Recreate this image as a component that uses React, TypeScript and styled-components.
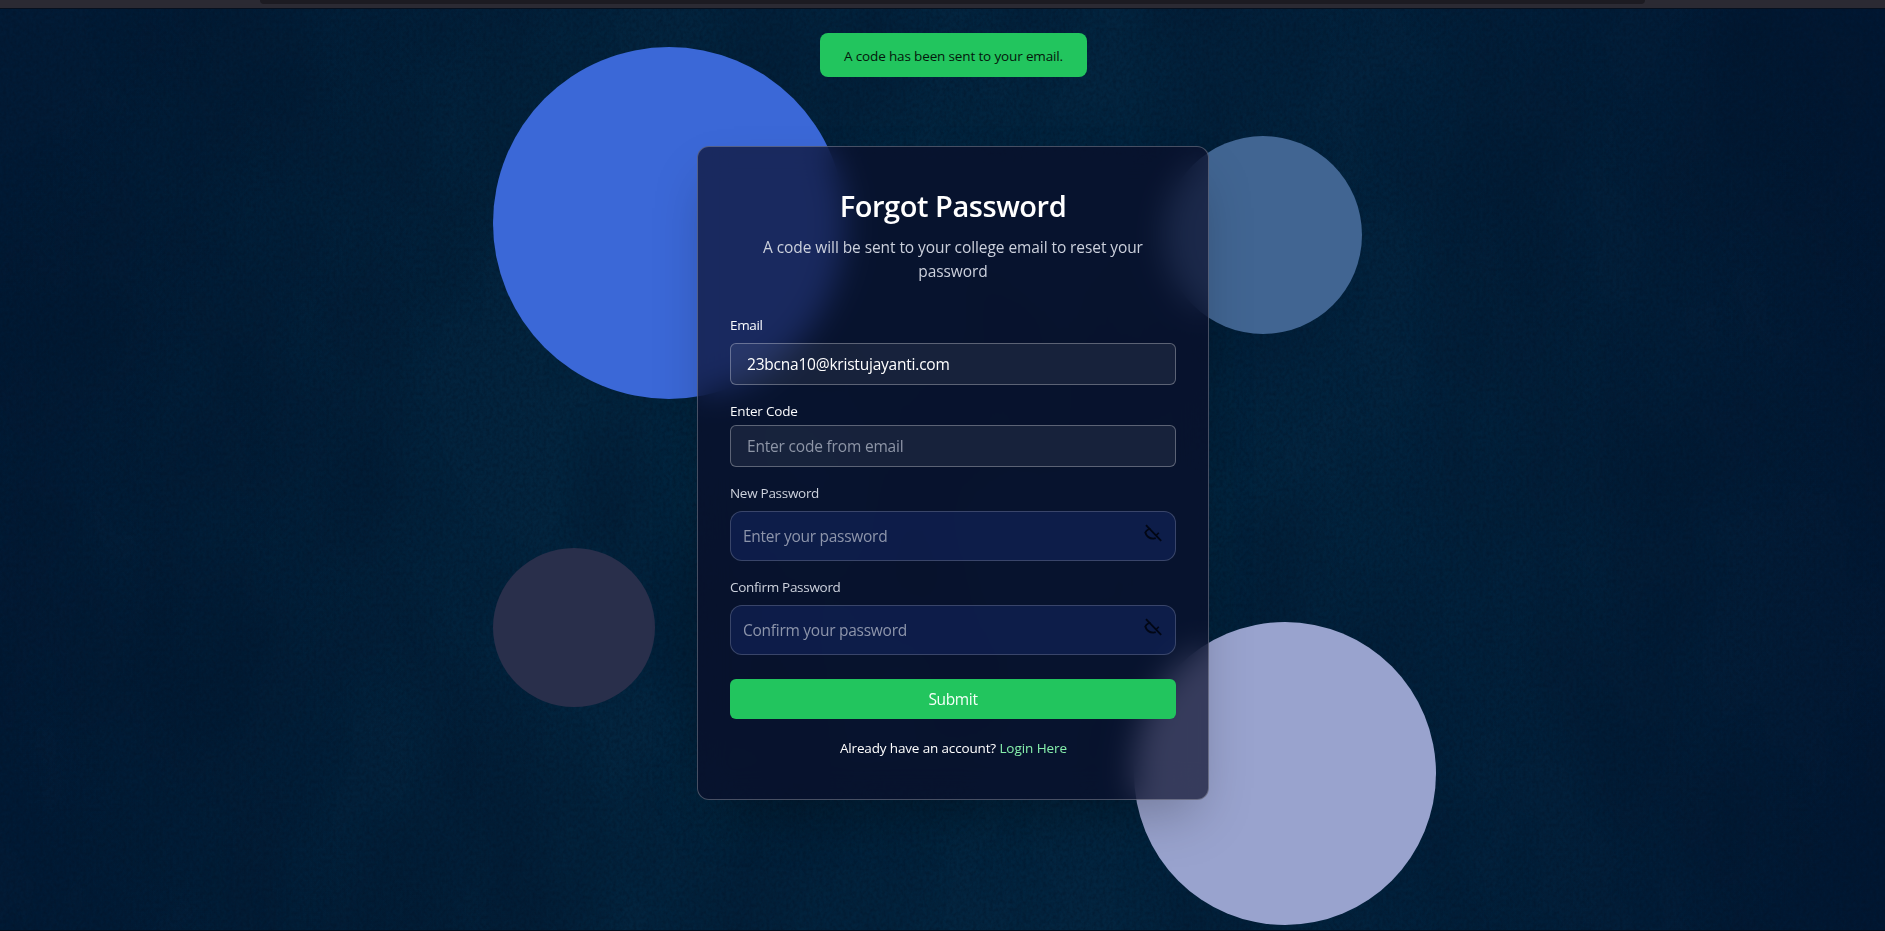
import React, { useState } from "react";
import styled, { createGlobalStyle } from "styled-components";

const GlobalStyle = createGlobalStyle`
  *, *::before, *::after { box-sizing: border-box; }
  body {
    margin: 0;
    overflow: hidden;
    background: #03203a;
    font-family: "Open Sans", "Noto Sans", sans-serif;
  }
`;

const Page = styled.div`
  position: relative;
  display: flex;
  flex-direction: column;
  height: 931px;
  overflow: hidden;
  border-bottom: 1px solid #020d1c;
  background:
    radial-gradient(ellipse 1000px 820px at 50% 52%, rgba(3, 42, 68, 0.6), rgba(3, 36, 62, 0) 100%),
    linear-gradient(90deg, #021b36 0%, #021d37 12%, #03223c 30%, #03233e 60%, #021e39 82%, #021833 100%);
`;

const Texture = styled.svg`
  position: absolute;
  inset: 0;
  width: 100%;
  height: 100%;
`;

const BrowserEdge = styled.div`
  position: relative;
  display: flex;
  justify-content: center;
  flex: none;
  height: 9px;
  padding-left: 20px;
  background: #2b2a33;
  border-bottom: 1px solid #06101f;
`;

const AddressBar = styled.div`
  width: 1385px;
  height: 4px;
  background: #1c1b22;
  border-radius: 0 0 4px 4px;
`;

const Circle = styled.div<{ $x: number; $y: number; $w: number; $h: number; $color: string }>`
  position: absolute;
  left: ${(p) => p.$x}px;
  top: ${(p) => p.$y}px;
  width: ${(p) => p.$w}px;
  height: ${(p) => p.$h}px;
  border-radius: 50%;
  background: ${(p) => p.$color};
`;

const Content = styled.main`
  display: flex;
  flex-direction: column;
  align-items: center;
  gap: 69px;
  padding: 24px 0 0 21px;
`;

const Toast = styled.div`
  position: relative;
  display: flex;
  align-items: center;
  justify-content: center;
  width: 267px;
  height: 44px;
  padding: 2px 0 0 1px;
  border-radius: 8px;
  background: #22c55e;
  color: #04170b;
  font-size: 13.5px;
  letter-spacing: -0.147px;
`;

const Card = styled.form`
  position: relative;
  display: flex;
  flex-direction: column;
  width: 512px;
  padding: 41px 32px 40px;
  border: 1px solid rgba(255, 255, 255, 0.26);
  border-radius: 12px;
  background: rgba(10, 13, 41, 0.69);
  backdrop-filter: blur(16px);
  box-shadow: 0 25px 50px -12px rgba(0, 0, 0, 0.25);
`;

const Title = styled.h1`
  margin: 0;
  color: #fff;
  font-size: 29px;
  font-weight: 600;
  line-height: 36px;
  letter-spacing: -0.45px;
  text-align: center;
`;

const Subtitle = styled.p`
  margin: 11px 0 32px;
  padding: 0 28px;
  color: #cbd0dc;
  font-size: 15.5px;
  line-height: 24px;
  letter-spacing: -0.08px;
  text-align: center;
`;

const Field = styled.div<{ $gap: number }>`
  display: flex;
  flex-direction: column;
  gap: ${(p) => p.$gap}px;
  margin-bottom: 16px;
`;

const Label = styled.label<{ $muted?: boolean; $track: number }>`
  color: ${(p) => (p.$muted ? "#cdd2dd" : "#fbfcfe")};
  font-size: 13.5px;
  line-height: 20px;
  letter-spacing: ${(p) => p.$track}px;
`;

const Input = styled.input<{ $track: number }>`
  width: 100%;
  height: 42px;
  padding: 0 16px;
  border: 1px solid rgba(255, 255, 255, 0.3);
  border-radius: 6px;
  outline: none;
  background: rgba(255, 255, 255, 0.065);
  color: #fff;
  font: 15.5px "Open Sans", "Noto Sans", sans-serif;
  letter-spacing: ${(p) => p.$track}px;
  &::placeholder { color: #8d95a6; opacity: 1; }
`;

const PasswordBox = styled.div`
  display: flex;
  height: 50px;
  padding: 0 13px 0 12px;
  border: 1px solid rgba(255, 255, 255, 0.18);
  border-radius: 12px;
  background: rgba(18, 36, 92, 0.6);
`;

const PasswordInput = styled.input<{ $track: number }>`
  flex: 1;
  min-width: 0;
  padding: 0;
  border: 0;
  outline: none;
  background: transparent;
  color: #fff;
  font: 15.5px "Open Sans", "Noto Sans", sans-serif;
  letter-spacing: ${(p) => p.$track}px;
  &::placeholder { color: #8d95ab; opacity: 1; }
`;

const EyeButton = styled.button`
  display: flex;
  align-self: flex-start;
  margin-top: 12px;
  padding: 0;
  border: 0;
  background: none;
  color: #020715;
`;

const Submit = styled.button`
  height: 40px;
  margin: 8px 0 19px;
  padding: 0;
  border: 0;
  border-radius: 6px;
  background: #22c55e;
  color: #f4fff8;
  font: 15.5px "Open Sans", "Noto Sans", sans-serif;
  letter-spacing: -0.35px;
`;

const Footer = styled.p`
  margin: 0 0 1px;
  padding-left: 1px;
  color: #fff;
  font-size: 13.5px;
  line-height: 20px;
  letter-spacing: -0.15px;
  text-align: center;
`;

const LoginLink = styled.a`
  color: #86efac;
  letter-spacing: -0.06px;
  text-decoration: none;
`;

const EyeOff = () => (
  <svg width="18" height="18" viewBox="0 0 18 18" fill="none" stroke="currentColor" strokeWidth="1.8">
    <path d="M2 1.2 17.2 16.9" />
    <path d="M6.6 5.2H4.6C3 6 1.8 7.2 1.3 8.6c1.4 3.8 4.4 6 8 6 .8 0 1.6-.1 2.4-.4" />
    <path d="M12 11.6 14.8 8.8" strokeWidth="1.5" />
  </svg>
);

const PasswordField = ({ id, label, placeholder, labelTrack, track }: {
  id: string; label: string; placeholder: string; labelTrack: number; track: number;
}) => {
  const [visible, setVisible] = useState(false);
  return (
    <Field $gap={8}>
      <Label htmlFor={id} $muted $track={labelTrack}>{label}</Label>
      <PasswordBox>
        <PasswordInput id={id} type={visible ? "text" : "password"} placeholder={placeholder} $track={track} />
        <EyeButton type="button" aria-label="Toggle visibility" onClick={() => setVisible(!visible)}>
          <EyeOff />
        </EyeButton>
      </PasswordBox>
    </Field>
  );
};

export default function App() {
  return (
    <Page>
      <GlobalStyle />
      <Texture aria-hidden="true">
        <filter id="grain" x="0" y="0" width="100%" height="100%" colorInterpolationFilters="sRGB">
          <feTurbulence type="fractalNoise" baseFrequency="0.3 0.25" numOctaves={3} seed={4} />
          <feColorMatrix values="0 0 0 0 0.01  0 0 0 0 0.07  0 0 0 0 0.15  1.6 0 0 0 -0.55" />
        </filter>
        <filter id="mottle" x="0" y="0" width="100%" height="100%" colorInterpolationFilters="sRGB">
          <feTurbulence type="fractalNoise" baseFrequency="0.007 0.004" numOctaves={4} seed={9} />
          <feColorMatrix values="0 0 0 0 0.005  0 0 0 0 0.08  0 0 0 0 0.17  2 0 0 0 -0.7" />
        </filter>
        <rect width="100%" height="100%" filter="url(#mottle)" opacity="0.4" />
        <rect width="100%" height="100%" filter="url(#grain)" opacity="0.5" />
      </Texture>
      <BrowserEdge><AddressBar /></BrowserEdge>
      <Circle $x={493} $y={46.5} $w={352} $h={352} $color="#3b68d7" />
      <Circle $x={1164} $y={136} $w={198} $h={198} $color="#416592" />
      <Circle $x={493} $y={548} $w={162} $h={159} $color="#292f4b" />
      <Circle $x={1134} $y={621.5} $w={302} $h={303} $color="#99a3ce" />
      <Content>
        <Toast role="status">A code has been sent to your email.</Toast>
        <Card onSubmit={(e) => e.preventDefault()}>
          <Title>Forgot Password</Title>
          <Subtitle>A code will be sent to your college email to reset your password</Subtitle>
          <Field $gap={8}>
            <Label htmlFor="email" $track={-0.37}>Email</Label>
            <Input id="email" defaultValue="23bcna10@kristujayanti.com" $track={-0.215} />
          </Field>
          <Field $gap={4}>
            <Label htmlFor="code" $track={-0.2}>Enter Code</Label>
            <Input id="code" placeholder="Enter code from email" $track={-0.19} />
          </Field>
          <PasswordField id="new" label="New Password" placeholder="Enter your password" labelTrack={-0.29} track={-0.28} />
          <PasswordField id="confirm" label="Confirm Password" placeholder="Confirm your password" labelTrack={-0.29} track={-0.26} />
          <Submit type="submit">Submit</Submit>
          <Footer>Already have an account? <LoginLink href="#">Login Here</LoginLink></Footer>
        </Card>
      </Content>
    </Page>
  );
}
